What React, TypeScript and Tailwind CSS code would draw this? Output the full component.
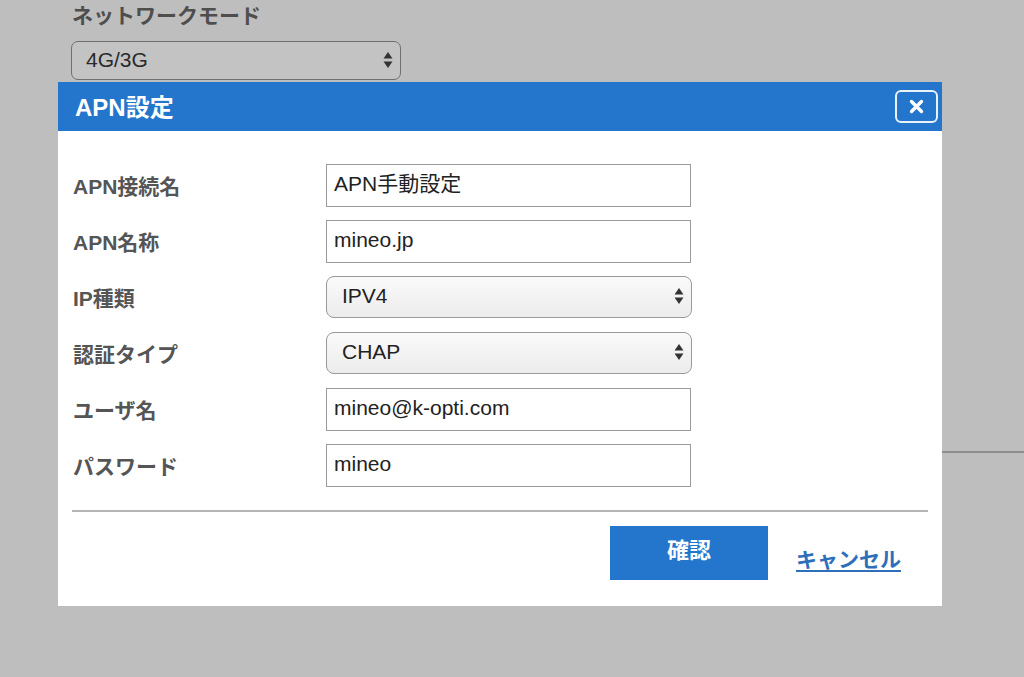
import React from "react";

const font = "font-['Liberation_Sans','Noto_Sans_CJK_JP',sans-serif]";

function Arrows() {
    return (
        <svg width="10" height="18" viewBox="0 0 10 18" className="shrink-0">
            <path d="M5 1 L9.5 7.5 L0.5 7.5 Z" fill="#333" />
            <path d="M5 17 L9.5 10.5 L0.5 10.5 Z" fill="#333" />
        </svg>
    );
}

function TextField({ value }: { value: string }) {
    return (
        <div className="w-[365px] h-[43px] border border-[#9a9a9a] bg-white flex items-center pl-[7px] pb-[2px] text-[21px] text-[#222]">
            {value}
        </div>
    );
}

function SelectField({ value }: { value: string }) {
    return (
        <div className="w-[366px] h-[42px] border border-[#9a9a9a] rounded-[8px] bg-gradient-to-b from-[#fafafa] to-[#ececec] flex items-center justify-between pl-[15px] pr-[7px] pb-[2px] text-[21px] text-[#222]">
            <span>{value}</span>
            <Arrows />
        </div>
    );
}

const rows: { label: string; kind: "text" | "select"; value: string }[] = [
    { label: "APN接続名", kind: "text", value: "APN手動設定" },
    { label: "APN名称", kind: "text", value: "mineo.jp" },
    { label: "IP種類", kind: "select", value: "IPV4" },
    { label: "認証タイプ", kind: "select", value: "CHAP" },
    { label: "ユーザ名", kind: "text", value: "mineo@k-opti.com" },
    { label: "パスワード", kind: "text", value: "mineo" },
];

export default function App() {
    return (
        <div className={`relative w-[1024px] h-[677px] overflow-hidden bg-[#bebebe] ${font}`}>
            {/* Page behind the dialog */}
            <div className="pl-[71px] pt-[1px]">
                <div className="text-[21px] font-bold text-[#4e4e4e] leading-[30px] pl-[1px]">ネットワークモード</div>
                <div className="mt-[10px] w-[330px] h-[39px] border border-[#6f6f6f] rounded-[7px] bg-[#c3c3c3] flex items-center justify-between pl-[14px] pr-[7px] pb-[1px] text-[21px] text-[#2a2a2a]">
                    <span>4G/3G</span>
                    <Arrows />
                </div>
            </div>
            <div className="mt-[371px] ml-[800px] h-[2px] bg-[#8e8e8e]" />

            {/* APN dialog */}
            <div className="absolute left-[58px] top-[82px] w-[884px] bg-white">
                <div className="h-[49px] bg-[#2475cc] flex items-center justify-between pl-[17px] pr-[4px]">
                    <span className="text-[24px] font-bold text-white pt-[2px]">APN設定</span>
                    <div className="w-[43px] h-[33px] border-2 border-white/90 rounded-[6px] flex items-center justify-center">
                        <svg width="15" height="15" viewBox="0 0 15 15">
                            <path d="M2.5 2.5 L12.5 12.5 M12.5 2.5 L2.5 12.5" stroke="white" strokeWidth="3.4" strokeLinecap="round" />
                        </svg>
                    </div>
                </div>

                <div className="px-[14px] pt-[26px]">
                    {rows.map((r) => (
                        <div key={r.label} className="h-[56px] flex items-center">
                            <div className="w-[254px] pl-[1px] pt-[4px] text-[21px] font-bold text-[#555]">{r.label}</div>
                            {r.kind === "text" ? <TextField value={r.value} /> : <SelectField value={r.value} />}
                        </div>
                    ))}
                    <div className="mt-[17px] h-[2px] bg-[#b5b5b5]" />
                    <div className="flex justify-end items-center pt-[14px] pb-[26px] pr-[27px] gap-[28px]">
                        <button className="w-[158px] h-[54px] bg-[#2475cc] text-white text-[22px] font-bold pb-[6px]">確認</button>
                        <a className="mt-[14px] text-[21px] font-bold text-[#2e6fb9] underline underline-offset-[3px]">キャンセル</a>
                    </div>
                </div>
            </div>
        </div>
    );
}
